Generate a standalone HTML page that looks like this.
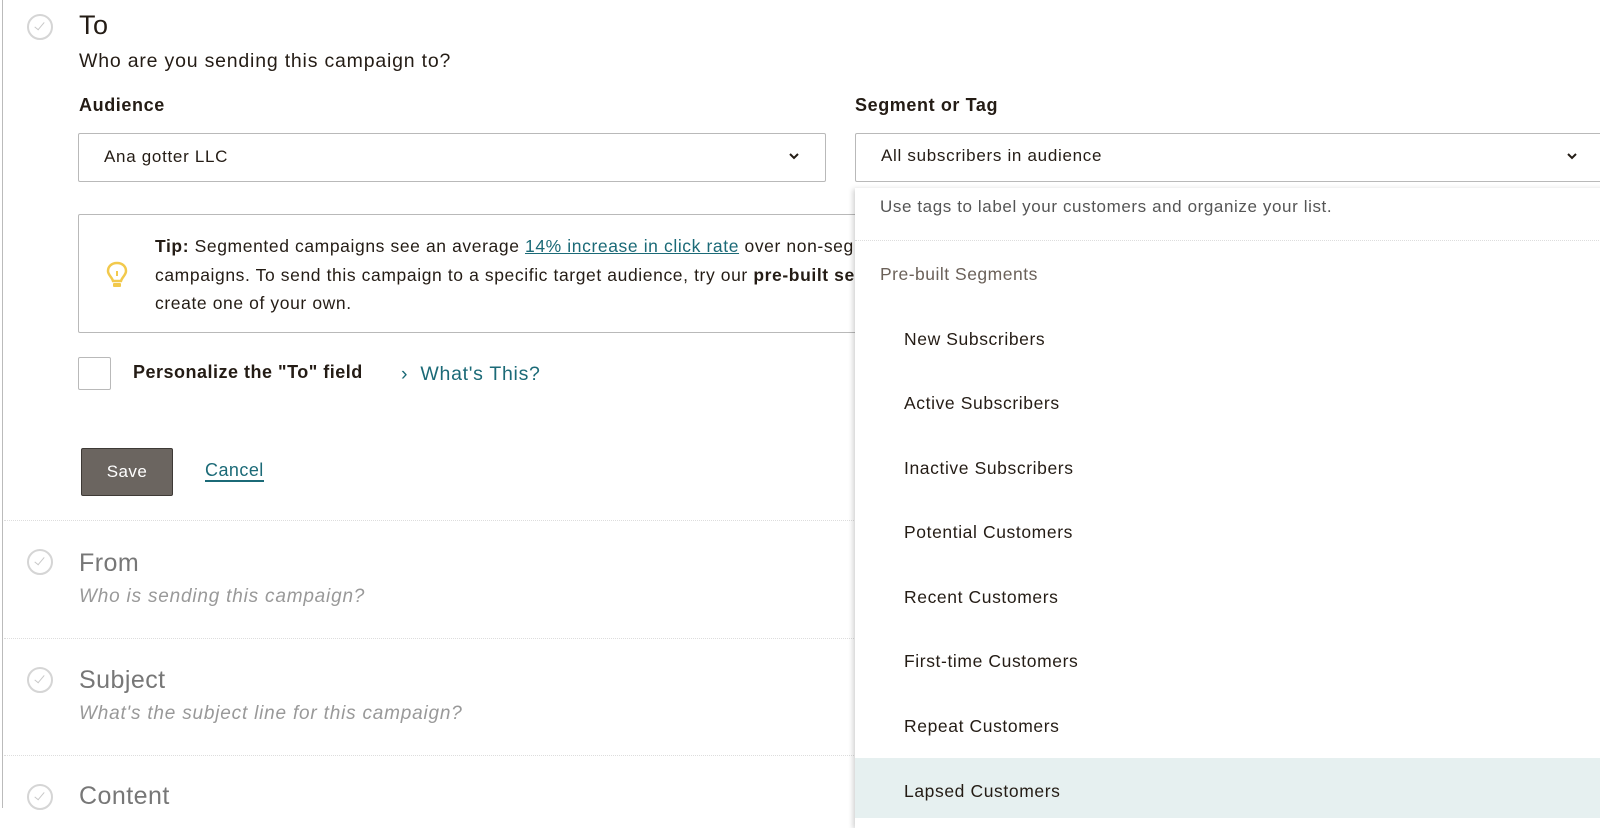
<!DOCTYPE html>
<html><head><meta charset="utf-8"><style>
body{margin:0;width:1600px;height:808px;overflow:hidden;background:#fff;font-family:"Liberation Sans",sans-serif;color:#241c15;position:relative;letter-spacing:0.45px}
.a{position:absolute;white-space:nowrap}
.chk{position:absolute;width:22px;height:22px;border:2px solid #d5d5d5;border-radius:50%}
.chk:after{content:"";position:absolute;left:8px;top:4px;width:4px;height:9px;border:solid #c8c8c8;border-width:0 1.5px 1.5px 0;transform:rotate(40deg)}
.sel{position:absolute;border:1px solid #b9b9b9;border-radius:2px;background:#fff}
.sep{position:absolute;left:4px;width:850px;border-top:1px dotted #ddd}
.item{position:absolute;left:904px;font-size:17.5px;color:#241c15;letter-spacing:0.6px}
</style></head><body>
<div class="a" style="left:2px;top:0;width:1px;height:808px;background:#bbb"></div>
<div class="chk" style="left:27px;top:14px"></div>
<div class="a" style="left:79px;top:10px;font-size:27px">To</div>
<div class="a" style="left:79px;top:50px;font-size:19.5px;letter-spacing:0.8px">Who are you sending this campaign to?</div>
<div class="a" style="left:79px;top:95px;font-size:18px;font-weight:bold;letter-spacing:0.6px">Audience</div>
<div class="a" style="left:855px;top:95px;font-size:18px;font-weight:bold;letter-spacing:0.6px">Segment or Tag</div>
<div class="sel" style="left:78px;top:133px;width:746px;height:47px"></div>
<div class="a" style="left:104px;top:147px;font-size:17px;letter-spacing:0.7px">Ana gotter LLC</div>
<svg class="a" style="left:788px;top:152px" width="12" height="9"><path d="M2 2 L6 6 L10 2" stroke="#241c15" stroke-width="2" fill="none"/></svg>
<div class="sel" style="left:855px;top:133px;width:750px;height:47px"></div>
<div class="a" style="left:881px;top:146px;font-size:17px;letter-spacing:0.7px">All subscribers in audience</div>
<svg class="a" style="left:1566px;top:152px" width="12" height="9"><path d="M2 2 L6 6 L10 2" stroke="#241c15" stroke-width="2" fill="none"/></svg>

<div class="sel" style="left:78px;top:214px;width:800px;height:117px"></div>
<svg class="a" style="left:106px;top:261px" width="22" height="30"><path d="M11 2 C5 2 2 6 2 10 C2 14 6 16 7 20 L15 20 C16 16 20 14 20 10 C20 6 17 2 11 2 Z" stroke="#f2c94c" stroke-width="2.5" fill="none"/><path d="M11 10 V15" stroke="#f2c94c" stroke-width="2"/><rect x="7" y="22" width="8" height="4" rx="1" fill="#f2c94c"/></svg>
<div class="a" style="left:155px;top:232px;font-size:17.5px;line-height:28.5px;letter-spacing:0.6px"><b>Tip:</b> Segmented campaigns see an average <span style="color:#1b6a77;text-decoration:underline">14% increase in click rate</span> over non-segmented<br>campaigns. To send this campaign to a specific target audience, try our <b>pre-built segments</b> or<br>create one of your own.</div>

<div class="a" style="left:78px;top:357px;width:31px;height:31px;border:1px solid #b9b9b9;border-radius:2px"></div>
<div class="a" style="left:133px;top:362px;font-size:18px;font-weight:bold;letter-spacing:0.5px">Personalize the "To" field</div>
<div class="a" style="left:401px;top:363px;font-size:19.5px;color:#1b6a77;letter-spacing:0.7px">›&nbsp; What's This?</div>

<div class="a" style="left:81px;top:448px;width:92px;height:48px;background:#6b6560;border:1px solid #3e3a36;border-radius:2px;box-sizing:border-box;color:#fff;font-size:17px;text-align:center;line-height:46px">Save</div>
<div class="a" style="left:205px;top:460px;font-size:18px;color:#1b6a77;border-bottom:2px solid #1b6a77;line-height:20px">Cancel</div>

<div class="sep" style="top:520px"></div>
<div class="chk" style="left:27px;top:549px"></div>
<div class="a" style="left:79px;top:549px;font-size:25px;color:#777">From</div>
<div class="a" style="left:79px;top:586px;font-size:19px;color:#999;font-style:italic;letter-spacing:0.8px">Who is sending this campaign?</div>
<div class="sep" style="top:638px"></div>
<div class="chk" style="left:27px;top:667px"></div>
<div class="a" style="left:79px;top:666px;font-size:25px;color:#777">Subject</div>
<div class="a" style="left:79px;top:703px;font-size:19px;color:#999;font-style:italic;letter-spacing:0.8px">What's the subject line for this campaign?</div>
<div class="sep" style="top:755px"></div>
<div class="chk" style="left:27px;top:784px"></div>
<div class="a" style="left:79px;top:782px;font-size:25px;color:#777">Content</div>

<div class="a" style="left:855px;top:188px;width:760px;height:640px;background:#fff;box-shadow:-2px 1px 5px rgba(0,0,0,.18)"></div>
<div class="a" style="left:880px;top:197px;font-size:17px;color:#555;letter-spacing:0.6px">Use tags to label your customers and organize your list.</div>
<div class="a" style="left:855px;top:240px;width:760px;border-top:1px dotted #ddd"></div>
<div class="a" style="left:880px;top:264px;font-size:17.5px;color:#6b6159;letter-spacing:0.5px">Pre-built Segments</div>
<div class="a" style="left:855px;top:758px;width:760px;height:60px;background:#e6f0f0"></div>
<div class="item" style="top:329px">New Subscribers</div>
<div class="item" style="top:393px">Active Subscribers</div>
<div class="item" style="top:458px">Inactive Subscribers</div>
<div class="item" style="top:522px">Potential Customers</div>
<div class="item" style="top:587px">Recent Customers</div>
<div class="item" style="top:651px">First-time Customers</div>
<div class="item" style="top:716px">Repeat Customers</div>
<div class="item" style="top:781px">Lapsed Customers</div>
</body></html>
